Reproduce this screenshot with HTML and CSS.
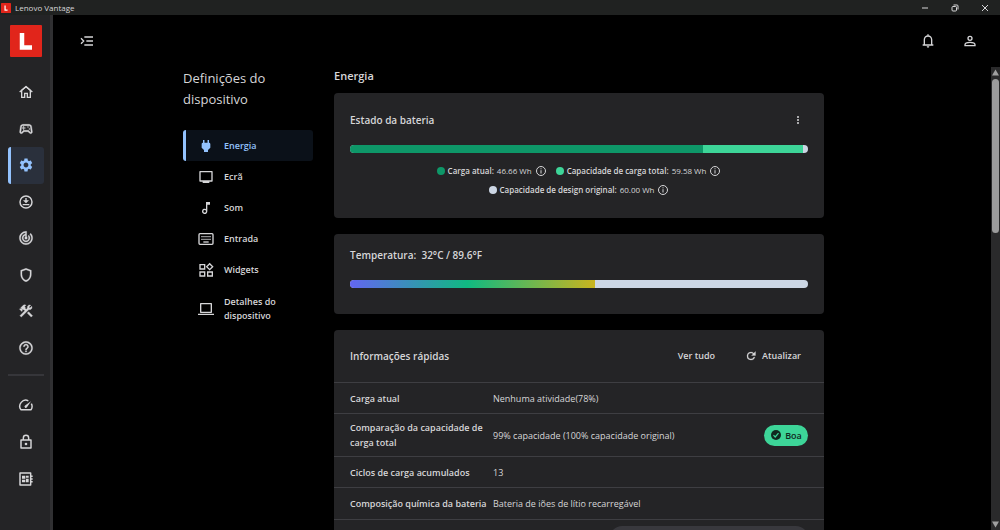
FILE: index.html
```html
<!DOCTYPE html>
<html lang="pt">
<head>
<meta charset="utf-8">
<title>Lenovo Vantage</title>
<link rel="stylesheet" href="styles.css">
</head>
<body>
<header class="titlebar">
  <svg class="app-logo" viewBox="0 0 32 32"><rect width="32" height="32" rx="2" fill="#e1251b"/><path d="M13 8v15h8" fill="none" stroke="#fff" stroke-width="4"/></svg>
  <span class="app-name">Lenovo Vantage</span>
  <div class="window-buttons">
    <button aria-label="Minimizar"><svg viewBox="0 0 10 10"><path d="M2 5h6" stroke="currentColor"/></svg></button>
    <button aria-label="Restaurar"><svg viewBox="0 0 10 10" fill="none" stroke="currentColor"><rect x="2" y="3.500" width="4.500" height="4.500" rx="1"/><path d="M3.500 2h3.500a1 1 0 0 1 1 1v3.500"/></svg></button>
    <button aria-label="Fechar"><svg viewBox="0 0 10 10"><path d="M2 2l6 6M8 2l-6 6" stroke="currentColor"/></svg></button>
  </div>
</header>
<div class="app">
  <aside class="sidebar">
    <svg class="brand" viewBox="0 0 32 32"><rect width="32" height="32" rx="1" fill="#e1251b"/><path d="M12 8v14.500h10" fill="none" stroke="#fff" stroke-width="4.500"/></svg>
    <nav class="rail rail-main" aria-label="Principal">
      <button aria-label="Início"><svg class="icon" viewBox="0 0 24 24"><path d="M12 4 5.500 9.500V20H10v-6h4v6h4.500V9.500z" fill="none" stroke="currentColor" stroke-width="2"/><path d="M2.500 12 12 3.800l9.500 8.200" fill="none" stroke="currentColor" stroke-width="2"/></svg></button>
      <button aria-label="Jogos"><svg class="icon" viewBox="0 0 24 24"><path stroke="currentColor" stroke-width=".5" d="M21.580 16.090l-1.090-7.660C20.210 6.460 18.520 5 16.530 5H7.470C5.480 5 3.790 6.460 3.510 8.430l-1.090 7.660C2.200 17.630 3.390 19 4.940 19c.68 0 1.320-.27 1.800-.75L9 16h6l2.250 2.250c.48.48 1.130.75 1.800.75 1.560 0 2.750-1.370 2.530-2.910zm-2.100.72c-.08.09-.21.19-.42.19-.15 0-.29-.06-.39-.16L15.830 14H8.170l-2.840 2.840c-.1.1-.24.16-.39.16-.21 0-.34-.1-.42-.19-.08-.09-.16-.23-.13-.44l1.090-7.660C5.630 7.740 6.480 7 7.470 7h9.060c.99 0 1.840.74 1.980 1.720l1.090 7.660c.03.2-.05.34-.12.43zM9 8H8v2H6v1h2v2h1v-2h2v-1H9z"/><circle cx="17" cy="12" r="1"/><circle cx="15" cy="9" r="1"/></svg></button>
      <button class="active" aria-label="Dispositivo"><svg class="icon" viewBox="0 0 24 24"><path d="M19.140 12.940c.04-.3.060-.61.060-.94 0-.32-.02-.64-.07-.94l2.030-1.580c.18-.14.230-.41.120-.61l-1.920-3.320c-.12-.22-.37-.29-.59-.22l-2.390.96c-.5-.38-1.030-.7-1.620-.94l-.36-2.540c-.04-.24-.24-.41-.48-.41h-3.840c-.24 0-.43.17-.47.41l-.36 2.540c-.59.24-1.130.57-1.620.94l-2.390-.96c-.22-.08-.47 0-.59.22L2.740 8.870c-.12.21-.08.47.12.61l2.030 1.580c-.05.3-.09.63-.09.94s.02.64.07.94l-2.030 1.580c-.18.14-.23.41-.12.61l1.920 3.320c.12.22.37.29.59.22l2.390-.96c.5.38 1.030.7 1.620.94l.36 2.540c.05.24.24.41.48.41h3.840c.24 0 .44-.17.47-.41l.36-2.540c.59-.24 1.130-.56 1.620-.94l2.390.96c.22.08.47 0 .59-.22l1.920-3.320c.12-.22.07-.47-.12-.61l-2.010-1.580zM12 15.600c-1.980 0-3.600-1.620-3.600-3.600s1.620-3.600 3.600-3.600 3.600 1.620 3.600 3.600-1.620 3.600-3.600 3.600z"/></svg></button>
      <button aria-label="Atualizações"><svg class="icon" viewBox="0 0 24 24"><circle cx="12" cy="12" r="9" fill="none" stroke="currentColor" stroke-width="2.200"/><path d="M11 6h2v3.500h3.500L12 14 7.500 9.500H11zM7 15h10v2H7z"/></svg></button>
      <button aria-label="Desempenho"><svg class="icon" viewBox="0 0 24 24"><path stroke="currentColor" stroke-width=".4" d="M19.070 4.930l-1.410 1.410C19.100 7.790 20 9.790 20 12c0 4.420-3.580 8-8 8s-8-3.580-8-8c0-4.080 3.050-7.440 7-7.930v2.020C8.160 6.570 6 9.030 6 12c0 3.310 2.690 6 6 6s6-2.690 6-6c0-1.660-.67-3.160-1.760-4.240l-1.410 1.410C15.550 9.900 16 10.900 16 12c0 2.210-1.790 4-4 4s-4-1.790-4-4c0-1.860 1.280-3.410 3-3.860v2.140c-.6.350-1 .98-1 1.720 0 1.100.9 2 2 2s2-.9 2-2c0-.74-.4-1.380-1-1.720V2h-1C6.480 2 2 6.480 2 12s4.480 10 10 10 10-4.480 10-10c0-2.760-1.120-5.260-2.930-7.070z"/></svg></button>
      <button aria-label="Segurança"><svg class="icon" viewBox="0 0 24 24"><path stroke="currentColor" stroke-width=".4" d="M12 2 4 5v6.090c0 5.050 3.410 9.760 8 10.910 4.590-1.150 8-5.860 8-10.910V5l-8-3zm6 9.090c0 4-2.550 7.700-6 8.830-3.450-1.130-6-4.820-6-8.830v-4.700l6-2.250 6 2.250v4.700z"/></svg></button>
      <button aria-label="Ferramentas"><svg class="icon" viewBox="0 0 24 24"><path stroke="currentColor" stroke-width=".5" d="M13.783 15.172l2.121-2.121 5.996 5.996-2.121 2.121zM17.500 10c1.930 0 3.500-1.570 3.500-3.500 0-.58-.16-1.120-.41-1.600l-2.700 2.700-1.490-1.490 2.700-2.700c-.48-.25-1.020-.41-1.600-.41C15.570 3 14 4.570 14 6.500c0 .41.080.8.210 1.160l-1.850 1.850-1.780-1.780.71-.71-1.410-1.410L12 3.490c-1.170-1.170-3.070-1.170-4.240 0L4.220 7.030l1.410 1.410H2.810l-.71.71 3.540 3.540.71-.71V9.150l1.410 1.410.71-.71 1.780 1.780-7.410 7.410 2.120 2.120L16.340 9.790c.36.13.75.21 1.160.21z"/></svg></button>
      <button aria-label="Ajuda"><svg class="icon" viewBox="0 0 24 24"><path stroke="currentColor" stroke-width=".4" d="M11 18h2v-2h-2v2zm1-16C6.480 2 2 6.480 2 12s4.480 10 10 10 10-4.480 10-10S17.520 2 12 2zm0 18c-4.410 0-8-3.590-8-8s3.590-8 8-8 8 3.590 8 8-3.590 8-8 8zm0-14c-2.210 0-4 1.790-4 4h2c0-1.100.9-2 2-2s2 .9 2 2c0 2-3 1.750-3 5h2c0-2.250 3-2.500 3-5 0-2.210-1.790-4-4-4z"/></svg></button>
    </nav>
    <hr class="rail-divider">
    <nav class="rail rail-extra" aria-label="Extras">
      <button aria-label="Velocidade"><svg class="icon" viewBox="0 0 24 24"><path d="M15.500 5.700A9 9 0 0 0 4.300 19h15.400a9 9 0 0 0 .3-9" fill="none" stroke="currentColor" stroke-width="2.200" stroke-linejoin="round"/><path d="M19.500 6.500 10.600 12.600a2 2 0 1 0 2.800 2.800z"/></svg></button>
      <button aria-label="Bloqueio"><svg class="icon" viewBox="0 0 24 24"><path d="M8 9V6a4 4 0 0 1 8 0v3M4.500 9h15v12h-15z" fill="none" stroke="currentColor" stroke-width="2.200" stroke-linejoin="round"/><circle cx="12" cy="15" r="2"/></svg></button>
      <button aria-label="Hardware"><svg class="icon" viewBox="0 0 24 24"><path d="M3 3h16v18H3zM19 8h3M19 12h3M19 16h3" fill="none" stroke="currentColor" stroke-width="2.200" stroke-linejoin="round"/><path d="M6 7h5v4.500H6zM12 7h4v3h-4zM6 13h5v4H6zM12 11.500h4V17h-4z"/></svg></button>
    </nav>
  </aside>
  <main class="main">
    <div class="topbar">
      <button aria-label="Expandir menu"><svg class="icon" viewBox="0 0 24 24" fill="none" stroke="currentColor" stroke-width="2"><path d="M8 6h13M11 12h10M8 18h13M3 8l4 4-4 4"/></svg></button>
      <div class="topbar-actions">
        <button aria-label="Notificações"><svg class="icon" viewBox="0 0 24 24"><path d="M4 18h16M6.500 18v-8a5.500 5.500 0 0 1 11 0v8M12 2v3" fill="none" stroke="currentColor" stroke-width="2"/><path d="M10 20h4a2 2 0 0 1-4 0z"/></svg></button>
        <button aria-label="Conta"><svg class="icon" viewBox="0 0 24 24" fill="none" stroke="currentColor" stroke-width="2"><circle cx="12" cy="8" r="3"/><path d="M4.500 19v-1.500c0-2.500 4-3.500 7.500-3.500s7.500 1 7.500 3.500V19z"/></svg></button>
      </div>
    </div>
    <div class="viewport">
      <div class="page">
        <section class="settings">
          <h1>Definições do dispositivo</h1>
          <nav class="settings-nav" aria-label="Definições do dispositivo">
            <a class="active" href="#energia"><svg class="icon" viewBox="0 0 24 24"><path d="M16.500 7V3h-2.200v4H9.700V3H7.500v4A2 2 0 0 0 5.500 9v5.500L9 18v3h6v-3l3.500-3.500V9a2 2 0 0 0-2-2z"/></svg>Energia</a>
            <a href="#ecra"><svg class="icon" viewBox="0 0 24 24"><path d="M3 4h18v14H3z" fill="none" stroke="currentColor" stroke-width="2" stroke-linejoin="round"/><path d="M7 18h10v3H7z"/></svg>Ecrã</a>
            <a href="#som"><svg class="icon" viewBox="0 0 24 24"><path d="M12 3v10.550A4 4 0 1 0 14 17V7h4V3h-6zm-2 16a2 2 0 1 1 0-4 2 2 0 0 1 0 4z"/></svg>Som</a>
            <a href="#entrada"><svg class="icon" viewBox="0 0 24 24" fill="none" stroke="currentColor"><rect x="1.500" y="4" width="21" height="16" rx="1.500" stroke-width="2"/><path d="M5 8.500h14M5 12.500h14" stroke-width="2" stroke-dasharray="2 1"/><path d="M8 16.500h8" stroke-width="2"/></svg>Entrada</a>
            <a href="#widgets"><svg class="icon" viewBox="0 0 24 24" fill="none" stroke="currentColor" stroke-width="2"><path d="M3 4h7v6.500H3zM3 15h7v6H3zM14.500 15h7v6h-7zM17.500 2.500 22 7l-4.500 4.500L13 7z"/></svg>Widgets</a>
            <a class="two-lines" href="#detalhes"><svg class="icon" viewBox="0 0 24 24" fill="none" stroke="currentColor" stroke-width="2"><path d="M4 4h16v13H4zM0 20h24" stroke-linejoin="round"/></svg>Detalhes do dispositivo</a>
          </nav>
        </section>
        <section class="content">
          <h2>Energia</h2>
          <article class="card battery">
            <div class="card-head">
              <h3>Estado da bateria</h3>
              <button aria-label="Mais opções"><svg class="icon-small" viewBox="0 0 12 12"><circle cx="6" cy="3" r="1"/><circle cx="6" cy="6" r="1"/><circle cx="6" cy="9" r="1"/></svg></button>
            </div>
            <div class="bar"><div class="charge" style="width:77%"></div><div class="full" style="width:22%"></div></div>
            <div class="legend">
              <span class="legend-item"><i class="dot dot-charge"></i><b>Carga atual:</b><span>46.66 Wh</span><button class="info" aria-label="Sobre a carga atual"><svg viewBox="0 0 12 12"><circle cx="6" cy="6" r="4.500" fill="none" stroke="currentColor"/><path d="M6 5.200v3.300M6 3.300v1" stroke="currentColor"/></svg></button></span>
              <span class="legend-item"><i class="dot dot-full"></i><b>Capacidade de carga total:</b><span>59.58 Wh</span><button class="info" aria-label="Sobre a carga total"><svg viewBox="0 0 12 12"><circle cx="6" cy="6" r="4.500" fill="none" stroke="currentColor"/><path d="M6 5.200v3.300M6 3.300v1" stroke="currentColor"/></svg></button></span>
              <span class="legend-item"><i class="dot dot-design"></i><b>Capacidade de design original:</b><span>60.00 Wh</span><button class="info" aria-label="Sobre a capacidade original"><svg viewBox="0 0 12 12"><circle cx="6" cy="6" r="4.500" fill="none" stroke="currentColor"/><path d="M6 5.200v3.300M6 3.300v1" stroke="currentColor"/></svg></button></span>
            </div>
          </article>
          <article class="card temperature">
            <h3>Temperatura:&nbsp; 32°C / 89.6°F</h3>
            <div class="bar"><div class="heat" style="width:53.4%"></div></div>
          </article>
          <article class="card quick">
            <div class="quick-head">
              <h3>Informações rápidas</h3>
              <button>Ver tudo</button>
              <button><svg class="icon-small" viewBox="0 0 24 24"><path d="M17.650 6.350A7.958 7.958 0 0 0 12 4a8 8 0 1 0 7.730 10h-2.080A5.990 5.990 0 0 1 12 18a6 6 0 1 1 0-12c1.660 0 3.140.69 4.220 1.780L13 11h8V3l-3.350 3.350z" stroke="currentColor" stroke-width=".5"/></svg>Atualizar</button>
            </div>
            <table>
              <tr><th scope="row">Carga atual</th><td colspan="2">Nenhuma atividade(78%)</td></tr>
              <tr class="tall"><th scope="row">Comparação da capacidade de carga total</th><td>99% capacidade (100% capacidade original)</td><td class="status"><span class="badge"><svg viewBox="0 0 12 12"><circle cx="6" cy="6" r="5" fill="#10291f"/><path d="M3.500 6.200 5.200 8l3.300-3.800" fill="none" stroke="#3dd598" stroke-width="1.200"/></svg>Boa</span></td></tr>
              <tr><th scope="row">Ciclos de carga acumulados</th><td colspan="2">13</td></tr>
              <tr><th scope="row">Composição química da bateria</th><td colspan="2">Bateria de iões de lítio recarregável</td></tr>
            </table>
            <div class="more"><button aria-label="Mais informações"></button></div>
          </article>
        </section>
      </div>
      <div class="scrollbar" aria-hidden="true">
        <svg viewBox="0 0 9 9"><path d="M4.500 1.500 8 7.500H1z"/></svg>
        <div class="track"><div class="thumb"></div></div>
        <svg viewBox="0 0 9 9"><path d="M4.500 7.500 8 1.500H1z"/></svg>
      </div>
    </div>
  </main>
</div>
</body>
</html>
```
FILE: styles.css
```css
* { box-sizing: border-box; }
body {
  margin: 0;
  height: 100vh;
  overflow: hidden;
  display: flex;
  flex-direction: column;
  background: #000;
  color: #d6d6d8;
  font: 9px/14px "Open Sans", "Noto Sans", sans-serif;
}
button {
  display: flex;
  align-items: center;
  justify-content: center;
  border: 0;
  padding: 0;
  background: none;
  color: inherit;
  font: inherit;
}
svg { display: block; flex: none; fill: currentColor; }
svg[fill="none"] { fill: none; }
h1, h2, h3 { margin: 0; font-weight: 600; }
.icon { width: 16px; height: 16px; }
.icon-small { width: 12px; height: 12px; }

.titlebar {
  display: flex;
  align-items: center;
  flex: none;
  height: 15px;
  padding-left: 1px;
  background: #202221;
  font-size: 8px;
}
.app-logo { width: 10px; height: 10px; }
.app-name { flex: 1; padding-left: 4px; }
.window-buttons { display: flex; }
.window-buttons button { width: 30px; height: 15px; }
.window-buttons svg { width: 10px; height: 10px; }

.app { display: flex; flex: 1; min-height: 0; }
.sidebar {
  flex: none;
  width: 53px;
  padding: 10px 6px 0 8px;
  border-right: 3px solid #303032;
  background: #242426;
}
.brand { width: 32px; height: 32px; margin: 0 2px 17px; }
.rail { display: flex; flex-direction: column; }
.rail-main { height: 292px; }
.rail-extra { height: 110px; }
.rail button { flex: 1; width: 36px; border-radius: 3px; }
.rail .active {
  border-left: 3px solid #93c2fd;
  padding-right: 3px;
  background: #2a303c;
  color: #93c2fd;
}
.rail-divider { width: 36px; height: 2px; margin: 8px 0 11px; border: 0; background: #36363a; }

.main { display: flex; flex: 1; flex-direction: column; min-width: 0; }
.topbar {
  display: flex;
  align-items: center;
  justify-content: space-between;
  flex: none;
  height: 52px;
  padding: 0 22px 0 26px;
}
.topbar-actions { display: flex; gap: 26px; }

.viewport { display: flex; flex: 1; min-height: 0; }
.page {
  display: grid;
  grid-template-columns: 130px minmax(0, 1fr);
  gap: 21px;
  flex: 1;
  padding: 0 167px 0 130px;
  overflow: hidden;
}
.settings h1 { padding-top: 1px; font-size: 13px; font-weight: 500; line-height: 21px; }
.settings-nav { display: flex; flex-direction: column; padding-top: 20px; font-weight: 600; }
.settings-nav a {
  display: flex;
  align-items: center;
  gap: 10px;
  height: 31px;
  padding: 0 16px 0 12px;
  border-left: 3px solid transparent;
  border-radius: 3px;
  color: inherit;
  text-decoration: none;
}
.settings-nav .two-lines { height: 47px; }
.settings-nav .active { border-color: #93c2fd; background: #0b1119; color: #93c2fd; }

.content { display: flex; flex-direction: column; gap: 16px; }
.content h2 { height: 10px; font-size: 11px; line-height: 17px; }
.card { flex: none; border-radius: 4px; background: #242426; }
.card h3 { font-size: 10px; line-height: 16px; }
.battery { height: 125px; padding: 18px 16px 0; }
.card-head { display: flex; align-items: center; justify-content: space-between; height: 17px; padding-right: 4px; }
.bar { display: flex; height: 8px; margin-top: 17px; border-radius: 4px; overflow: hidden; background: #ccd6e4; }
.charge { background: #0e9768; }
.full { background: #3dd598; }
.heat { background: linear-gradient(90deg, #6366f1, #10b981 48%, #c9b41f); }
.legend { display: flex; flex-wrap: wrap; justify-content: center; gap: 5px 9px; padding-top: 11px; font-size: 8px; }
.legend-item { display: flex; align-items: center; gap: 3px; }
.legend b { font-weight: 600; }
.dot { width: 8px; height: 8px; border-radius: 50%; }
.dot-charge { background: #0e9768; }
.dot-full { background: #3dd598; }
.dot-design { background: #ccd6e4; }
.info svg { width: 12px; height: 12px; }
.temperature { height: 80px; padding: 13px 16px 0; }

.quick-head { display: flex; align-items: center; gap: 30px; height: 52px; padding: 0 23px 0 16px; }
.quick-head h3 { flex: 1; }
.quick-head button { gap: 5px; font-weight: 600; }
table { width: 100%; border-collapse: collapse; table-layout: auto; }
tr { height: 31px; border-top: 1px solid #3e3e42; }
tr.tall { height: 43px; }
th { width: 159px; padding: 0 0 0 16px; font-weight: 600; line-height: 15px; text-align: left; }
td { padding: 0; line-height: 15px; }
.status { width: 60px; padding-right: 16px; }
.badge {
  display: flex;
  align-items: center;
  justify-content: center;
  gap: 3px;
  width: 44px;
  height: 21px;
  border-radius: 11px;
  background: #3dd598;
  color: #10291f;
  font-weight: 600;
}
.badge svg { width: 12px; height: 12px; }
.more { display: flex; justify-content: flex-end; padding: 6px 16px; border-top: 1px solid #3e3e42; }
.more button { width: 198px; height: 24px; border-radius: 12px; background: #38383d; }

.scrollbar { display: flex; flex-direction: column; align-items: center; width: 9px; padding: 1px 0; background: #2a2a2b; color: #a0a0a0; }
.scrollbar svg { width: 9px; height: 9px; }
.track { flex: 1; width: 7px; padding-top: 2px; }
.thumb { height: 35%; border-radius: 4px; background: #9c9c9c; }
```
